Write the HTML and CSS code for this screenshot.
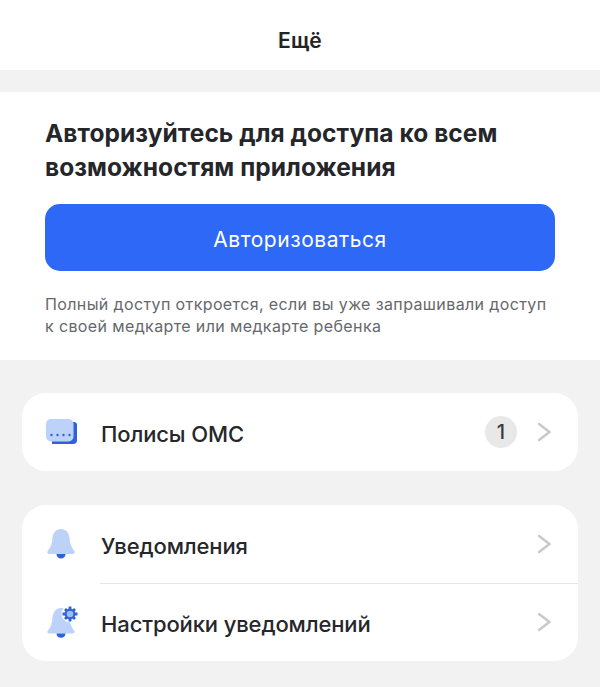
FILE: index.html
```html
<!DOCTYPE html>
<html lang="ru">
<head>
<meta charset="utf-8">
<title>Ещё</title>
<link rel="stylesheet" href="styles.css">
</head>
<body>
<div class="page">
  <header class="top">Ещё</header>
  <section class="auth">
    <h1 class="auth-title">Авторизуйтесь для доступа ко всем возможностям приложения</h1>
    <button class="auth-btn">Авторизоваться</button>
    <p class="auth-note">Полный доступ откроется, если вы уже запрашивали доступ к своей медкарте или медкарте ребенка</p>
  </section>
  <section class="card card-one">
    <div class="row row-policy">
      <svg class="icon icon-policy" viewBox="0 0 31 25" aria-hidden="true">
        <path d="M6 3h22a3 3 0 0 1 3 3v15a4 4 0 0 1-4 4H6z" fill="#2f62d9"/>
        <rect x="0" y="0" width="27.500" height="22.500" rx="5" fill="#bcd2f8"/>
        <g fill="#2f62d9"><circle cx="5.500" cy="16" r="1.200"/><circle cx="11.500" cy="16" r="1.200"/><circle cx="17.500" cy="16" r="1.200"/><circle cx="23.500" cy="16" r="1.200"/></g>
      </svg>
      <span class="label">Полисы ОМС</span>
      <span class="badge">1</span>
      <svg class="chev" viewBox="0 0 14 20" aria-hidden="true"><path d="M1 2l10.500 8L1 18" /></svg>
    </div>
  </section>
  <section class="card card-two">
    <div class="row row-notify">
      <svg class="icon icon-bell" viewBox="0 0 28 30" aria-hidden="true">
        <path d="M14 0c5 0 8 3.500 8.500 9 .4 5 1.500 9 4.500 12.500 1.500 2 .5 3.500-2 3.500H3c-2.500 0-3.500-1.500-2-3.500C4 18 5.100 14 5.500 9 6 3.500 9 0 14 0z" fill="#bcd2f8"/>
        <path d="M9.500 25h9c0 2.800-2 4.500-4.500 4.500s-4.500-1.700-4.500-4.500z" fill="#2f62d9"/>
      </svg>
      <span class="label">Уведомления</span>
      <svg class="chev" viewBox="0 0 14 20" aria-hidden="true"><path d="M1 2l10.500 8L1 18" /></svg>
    </div>
    <div class="row row-settings">
      <svg class="icon icon-gear" viewBox="0 0 31 32" aria-hidden="true">
        <path d="M14 2c5 0 8 4 8.500 10 .4 5 1.500 9 4.500 12.500 1.500 2 .5 3-2 3H3c-2.500 0-3.500-1-2-3C4 21 5.100 17 5.500 12 6 6 9 2 14 2z" fill="#bcd2f8"/>
        <path d="M9.500 27.500h9c0 2.800-2 4.300-4.500 4.300s-4.500-1.500-4.500-4.300z" fill="#2f62d9"/>
        <circle cx="23" cy="8" r="8.500" fill="#fff"/>
        <g stroke="#2f62d9" stroke-width="2.800">
          <path d="M23 0.500v15M15.500 8h15M18 3l10 10M28 3L18 13"/>
        </g>
        <circle cx="23" cy="8" r="5.400" fill="#2f62d9"/>
        <circle cx="23" cy="8" r="3.300" fill="#9dbcf2"/>
      </svg>
      <span class="label">Настройки уведомлений</span>
      <svg class="chev" viewBox="0 0 14 20" aria-hidden="true"><path d="M1 2l10.500 8L1 18" /></svg>
    </div>
  </section>
</div>
</body>
</html>
```
FILE: styles.css
```css
* { box-sizing: border-box; }
html, body { margin: 0; padding: 0; }
body {
  background: #f2f2f2;
  font-family: Inter, "Liberation Sans", sans-serif;
  color: #222325;
}
.page { width: 600px; height: 687px; overflow: hidden; }
.top {
  height: 70px;
  padding-top: 10px;
  background: #fff;
  display: flex;
  align-items: center;
  justify-content: center;
  font-size: 21px;
  font-weight: 600;
  letter-spacing: 0.2px;
}
.auth {
  margin-top: 22px;
  height: 268px;
  background: #fff;
  padding: 24px 45px 0;
}
.auth-title {
  margin: 0;
  font-size: 24.500px;
  line-height: 34px;
  font-weight: 700;
  letter-spacing: 0.05px;
  color: #25262a;
}
.auth-btn {
  display: block;
  width: 100%;
  height: 67px;
  margin-top: 20px;
  padding-top: 4px;
  border: 0;
  border-radius: 15px;
  background: #2d69f6;
  color: #fff;
  font: 400 21px Inter, "Liberation Sans", sans-serif;
  letter-spacing: 0.550px;
}
.auth-note {
  margin: 22px 0 0;
  font-size: 16px;
  line-height: 22px;
  letter-spacing: 0.380px;
  color: #66686c;
}
.card { background: #fff; border-radius: 24px; margin: 0 22px; }
.card-one { margin-top: 33px; }
.card-two { margin-top: 34px; }
.row { display: flex; align-items: center; padding-left: 24px; position: relative; }
.row-policy { height: 78px; padding-right: 26px; }
.row-notify { height: 78px; padding-right: 26px; }
.row-settings { height: 78px; padding-right: 26px; }
.row-settings::before {
  content: "";
  position: absolute;
  top: 0;
  left: 78px;
  right: 0;
  height: 1px;
  background: #e6e6e6;
}
.icon { flex: none; }
.icon-policy { width: 31px; height: 25px; margin-top: -1px; margin-right: 1px; }
.icon-bell { width: 28px; height: 30px; margin-left: 1px; margin-right: 3px; }
.icon-gear { width: 31px; height: 32px; margin-left: 1px; }
.label { margin-left: 23px; padding-top: 4px; flex: 1; font-size: 22px; font-weight: 500; color: #26272a; letter-spacing: -0.120px; }
.badge {
  width: 32px;
  height: 32px;
  border-radius: 50%;
  background: #e8e8e9;
  display: flex;
  align-items: center;
  justify-content: center;
  font-size: 20px;
  font-weight: 500;
  color: #3a3b3e;
  margin-right: 21px;
}
.chev { width: 14px; height: 20px; flex: none; }
.chev path { fill: none; stroke: #c8c9cb; stroke-width: 2.500; stroke-linecap: round; stroke-linejoin: round; }
```
